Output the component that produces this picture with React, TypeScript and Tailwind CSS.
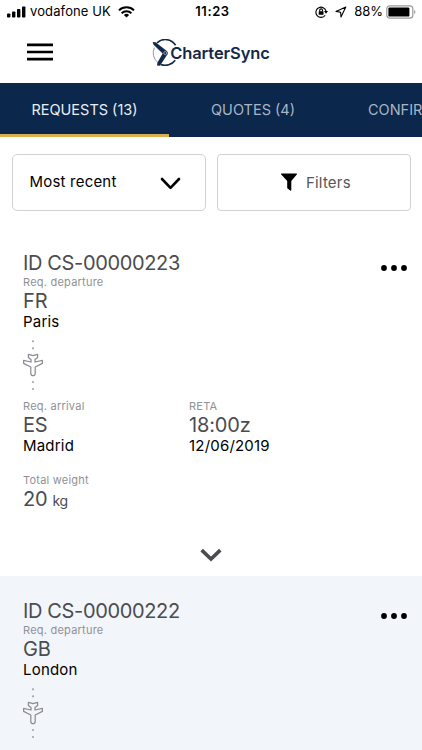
type Stop = { code: string; city: string };

type Request = {
  id: string;
  departure: Stop;
  arrival?: Stop;
  time?: string;
  date?: string;
  weight?: number;
};

const requests: Request[] = [
  {
    id: "CS-00000223",
    departure: { code: "FR", city: "Paris" },
    arrival: { code: "ES", city: "Madrid" },
    time: "18:00z",
    date: "12/06/2019",
    weight: 20,
  },
  {
    id: "CS-00000222",
    departure: { code: "GB", city: "London" },
  },
];

function StatusBar() {
  return (
    <div className="grid h-6 shrink-0 grid-cols-[1fr_auto_1fr] items-center pl-[7px] pr-[6px] text-black">
      <div className="flex items-center">
        <svg width="19" height="12" viewBox="0 0 19 12">
          <rect x="0" y="7.5" width="3.4" height="4" rx="0.8" />
          <rect x="5" y="5.5" width="3.4" height="6" rx="0.8" />
          <rect x="10" y="3" width="3.4" height="8.5" rx="0.8" />
          <rect x="15" y="0.5" width="3.4" height="11" rx="0.8" />
        </svg>
        <span className="ml-[4px] text-[13px] tracking-[0.12px]">vodafone UK</span>
        <svg className="ml-[7px]" width="17" height="12" viewBox="0 0 17 12" fill="none" stroke="#000">
          <path d="M1 4.4a10.8 10.8 0 0 1 15 0" strokeWidth="2" />
          <path d="M3.6 7.2a7 7 0 0 1 9.8 0" strokeWidth="1.9" />
          <path d="M8.5 11.6 5.9 9a3.8 3.8 0 0 1 5.2 0z" fill="#000" stroke="none" />
        </svg>
      </div>
      <span className="pl-[2px] text-[13px] font-semibold tracking-[0.6px]">11:23</span>
      <div className="flex items-center justify-end">
        <svg width="13" height="12" viewBox="0 0 13 12" fill="none" stroke="#000" strokeWidth="1.1">
          <path d="M10.2 9.2A5.1 5.1 0 1 1 11 5.2" />
          <path d="M9 5.1h4l-2 2.6z" fill="#000" stroke="none" />
          <rect x="3.7" y="5.2" width="4.8" height="3.6" rx="0.5" fill="#000" stroke="none" />
          <path d="M4.7 5.4V4.3a1.4 1.4 0 0 1 2.8 0v1.1" />
        </svg>
        <svg className="ml-[7px]" width="12" height="12" viewBox="0 0 12 12" fill="none" stroke="#000" strokeWidth="1.1" strokeLinejoin="round">
          <path d="M10.8 1 1 5.4l4.6.8.4 4.7z" />
        </svg>
        <span className="ml-[7px] text-[13px]">88%</span>
        <svg className="ml-[3px]" width="30" height="14" viewBox="0 0 30 14">
          <rect x="0.8" y="0.8" width="26" height="12.4" rx="3" fill="#fff" stroke="#999" strokeWidth="1.2" />
          <rect x="2.4" y="2.4" width="21" height="9.2" rx="1.2" fill="#000" />
          <path d="M28.2 4.8c1.6.8 1.6 3.6 0 4.4z" fill="#999" />
        </svg>
      </div>
    </div>
  );
}

function Logo() {
  return (
    <div className="-mt-[2px] flex items-center text-[#12294b]">
      <svg width="26" height="28" viewBox="0 0 26 28" fill="none">
        <path d="M5 3.8A12.2 12.2 0 0 1 23.6 6.2" stroke="#12294b" strokeWidth="1.6" />
        <path d="M2.4 8.6A12.2 12.2 0 0 0 6 23.6" stroke="#7f8ca0" strokeWidth="0.9" />
        <path d="M8.8 25.4A12.2 12.2 0 0 0 23.2 21.2" stroke="#12294b" strokeWidth="1.6" />
        <path
          d="M.6 3 3.6 3.2 14.2 11.4A2.9 2.9 0 0 1 14.8 16.2L8 26.8 5 26.4 5.400 23.800 10.600 14.400 1.600 5.800z"
          fill="#12294b"
        />
        <circle cx="13.2" cy="14" r="1.5" stroke="#a9b6c8" strokeWidth="0.8" />
      </svg>
      <span className="-ml-[8px] mt-px text-[16.5px] font-semibold leading-5 tracking-[-0.1px]">CharterSync</span>
    </div>
  );
}

function Header() {
  return (
    <header className="grid h-[59px] shrink-0 grid-cols-[1fr_auto_1fr] items-center">
      <button className="-mt-[4px] ml-[27px] w-[26px]" aria-label="Menu">
        <svg width="26" height="18" viewBox="0 0 26 18" stroke="#000" strokeWidth="2.7">
          <path d="M0 1.9h26M0 9h26M0 16.1h26" />
        </svg>
      </button>
      <Logo />
      <span />
    </header>
  );
}

function Tabs() {
  return (
    <nav className="flex h-[54px] shrink-0 overflow-hidden bg-[#0b274b] text-[14.5px] text-[#a9b5c6]">
      <div className="flex w-[169px] shrink-0 items-center justify-center border-b-[3px] border-[#dcae4f] pt-[3px] text-[#e9eef6]">
        REQUESTS (13)
      </div>
      <div className="flex w-[168px] shrink-0 items-center justify-center">QUOTES (4)</div>
      <div className="flex shrink-0 items-center pl-[31px]">CONFIR</div>
    </nav>
  );
}

function Toolbar() {
  return (
    <div className="grid h-[91px] shrink-0 grid-cols-2 gap-[11px] pl-[11.5px] pr-[11px] pt-[17px]">
      <button className="flex h-[57px] items-center justify-between rounded-[5px] border border-[#d2d2d2] pl-[17px] pr-[24px] text-[15px] tracking-[0.2px] text-black">
        Most recent
        <svg className="mt-px" width="21" height="13" viewBox="0 0 21 13" fill="none" stroke="#000" strokeWidth="2.6" strokeLinecap="round" strokeLinejoin="round">
          <path d="M2 2l8.5 8.8L19 2" />
        </svg>
      </button>
      <button className="flex h-[57px] items-center justify-center rounded-[4px] border border-[#d2d2d2] pl-[4px] pt-px text-[15px] tracking-[0.2px] text-[#55565a]">
        <svg className="-mt-[3px] mr-[9px]" width="16" height="18" viewBox="0 0 16 18">
          <path d="M.6.5h14.8c.6 0 .8.6.4 1.1L10.3 8v9c0 .6-.6.9-1.1.5l-2.6-1.9c-.3-.2-.4-.4-.4-.8V8L.2 1.6C-.2 1.1 0 .5.6.5z" />
        </svg>
        Filters
      </button>
    </div>
  );
}

function RouteIcon() {
  return (
    <svg className="mt-[7px] mb-[8px]" width="21" height="52" viewBox="0 0 21 52" fill="none">
      <g fill="#a3a5a8">
        <circle cx="10" cy="2.3" r="1.1" />
        <circle cx="10" cy="9.3" r="1.1" />
        <circle cx="10" cy="43" r="1.1" />
        <circle cx="10" cy="50" r="1.1" />
      </g>
      <path
        d="M10 16.6 14.6 15.4V18.4L12 20.6V23L19.4 21.4V24.4L12.2 28V34.4Q12.2 36.6 10 36.600T7.8 34.400V28L.6 24.400V21.400L8 23V20.600L5.400 18.400V15.400z"
        stroke="#8b8d91"
        strokeWidth="1.25"
        strokeLinejoin="round"
      />
    </svg>
  );
}

function Label({ children }: { children: string }) {
  return <div className="text-[11px] leading-[14px] tracking-[0.23px] text-[#8f9195]">{children}</div>;
}

function Field({ label, value, detail }: { label: string; value: string; detail?: string }) {
  return (
    <div>
      <Label>{label}</Label>
      <div className="text-[20px] leading-[25px] tracking-[-0.15px] text-[#4b4c50]">{value}</div>
      <div className="-mt-px mb-px text-[15px] leading-[18px] tracking-[0.2px] text-black">{detail}</div>
    </div>
  );
}

function RequestCard({ request }: { request: Request }) {
  const { id, departure, arrival, time, date, weight } = request;
  return (
    <article className="flex h-[348px] shrink-0 flex-col px-[23px] pt-[23px] even:bg-[#f2f5fa]">
      <div className="flex justify-between">
        <h2 className="text-[20px] leading-6 tracking-[-0.36px] text-[#4b4c50]">ID {id}</h2>
        <svg className="-mr-[9px] mt-[14px]" width="28" height="6" viewBox="0 0 28 6">
          <circle cx="4" cy="3" r="2.9" />
          <circle cx="14" cy="3" r="2.9" />
          <circle cx="24" cy="3" r="2.9" />
        </svg>
      </div>
      <Field label="Req. departure" value={departure.code} detail={departure.city} />
      <RouteIcon />
      {arrival && (
        <>
          <div className="grid grid-cols-[166px_1fr]">
            <Field label="Req. arrival" value={arrival.code} detail={arrival.city} />
            {time && <Field label="RETA" value={time} detail={date} />}
          </div>
          <div className="mt-[17px]">
            <Label>Total weight</Label>
            <div className="text-[20px] leading-[25px] tracking-[-0.3px] text-[#4b4c50]">
              {weight} <span className="text-[14px]">kg</span>
            </div>
          </div>
          <svg className="mx-auto mt-[35px]" width="22" height="15" viewBox="0 0 22 15" fill="none" stroke="#4b4c50" strokeWidth="3.6" strokeLinecap="square">
            <path d="M3 3.4l8 7.6 8-7.6" />
          </svg>
        </>
      )}
    </article>
  );
}

export default function App() {
  return (
    <div className="flex h-[750px] w-[422px] flex-col overflow-hidden bg-white font-['Inter',sans-serif]">
      <StatusBar />
      <Header />
      <Tabs />
      <Toolbar />
      <main className="flex flex-col">
        {requests.map((r) => (
          <RequestCard key={r.id} request={r} />
        ))}
      </main>
    </div>
  );
}
